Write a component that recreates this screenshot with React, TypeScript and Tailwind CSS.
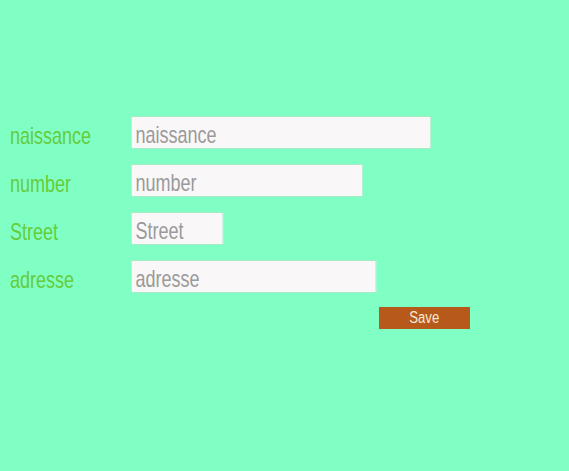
const fields = [
  { name: "naissance", width: "w-[400px]" },
  { name: "number", width: "w-[309px]" },
  { name: "Street", width: "w-[123px]" },
  { name: "adresse", width: "w-[327px]" },
];

// the font in the shot is a tall narrow Arial, so squeeze Liberation Sans
const App = () => {
  return (
    <div className="min-h-[471px] w-full bg-[#80ffc5] font-['Liberation_Sans',Arial,sans-serif] pt-[116px] overflow-hidden">
      <form className="flex flex-col gap-[15px]">
        {fields.map((f) => (
          <div key={f.name} className="flex items-start h-[33px]">
            <label className="w-[131px] shrink-0 pl-[10px] pt-[3px] leading-[33px] text-[24px] text-[#66cc3a] whitespace-nowrap">
              <span className="inline-block scale-x-[0.75] origin-left">{f.name}</span>
            </label>
            <input
              placeholder={f.name}
              className={`${f.width} shrink-0 h-[33px] scale-x-[0.75] origin-left border border-[#a6ebc6] bg-[#f9f7f8] pl-[5px] pr-[4px] pt-[5px] pb-0 text-[24px] leading-[26px] text-[#999] placeholder:text-[#9a9a9a] outline-none`}
            />
          </div>
        ))}
        <div className="flex -mt-[1px]">
          <button
            type="button"
            className="ml-[379px] w-[91px] h-[22px] bg-[#b6591b] text-[16px] leading-[22px] text-[#f3ead8]"
          >
            <span className="inline-block scale-x-[0.82]">Save</span>
          </button>
        </div>
      </form>
    </div>
  );
};

export default App;
